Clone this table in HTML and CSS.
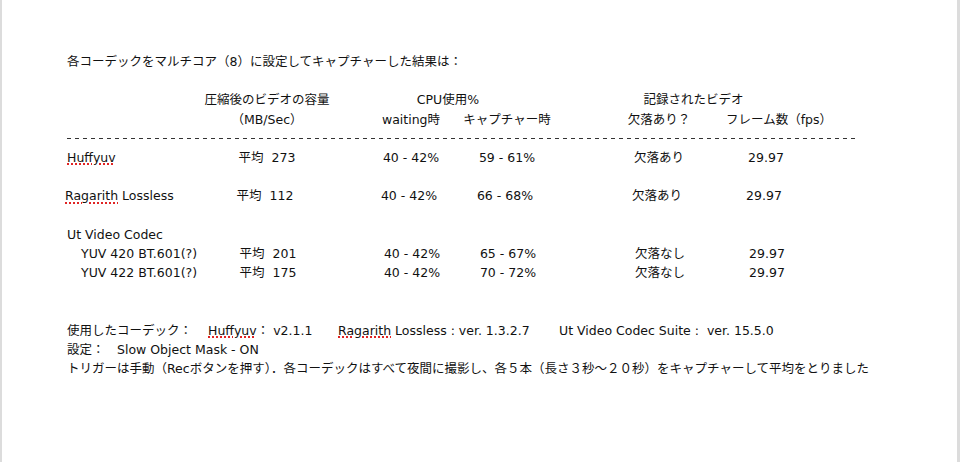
FILE: index.html
```html
<!DOCTYPE html>
<html lang="ja">
<head>
<meta charset="utf-8">
<title>コーデック比較</title>
<link rel="stylesheet" href="styles.css">
</head>
<body>
<div class="page">
  <p class="line">各コーデックをマルチコア（8）に設定してキャプチャーした結果は：</p>

  <div class="table">
    <div class="row">
      <div class="cell c2">圧縮後のビデオの容量</div>
      <div class="cell cpu">CPU使用%</div>
      <div class="cell rec">記録されたビデオ</div>
    </div>
    <div class="row">
      <div class="cell c2">（MB/Sec）</div>
      <div class="cell c3">waiting時</div>
      <div class="cell c4">キャプチャー時</div>
      <div class="cell c5">欠落あり？</div>
      <div class="cell c6 fps">フレーム数（fps）</div>
    </div>
    <div class="rule"></div>
    <div class="row">
      <div class="name"><span class="spell">Huffyuv</span></div>
      <div class="cell c2">平均&nbsp;&nbsp;273</div>
      <div class="cell c3">40 - 42%</div>
      <div class="cell c4">59 - 61%</div>
      <div class="cell c5">欠落あり</div>
      <div class="cell c6">29.97</div>
    </div>
    <div class="row spaced shift-l">
      <div class="name"><span class="spell">Ragarith</span> Lossless</div>
      <div class="cell c2">平均&nbsp;&nbsp;112</div>
      <div class="cell c3">40 - 42%</div>
      <div class="cell c4">66 - 68%</div>
      <div class="cell c5">欠落あり</div>
      <div class="cell c6">29.97</div>
    </div>
    <div class="row spaced">
      <div class="name">Ut Video Codec</div>
    </div>
    <div class="row shift-r">
      <div class="name sub">YUV 420 BT.601(?)</div>
      <div class="cell c2">平均&nbsp;&nbsp;201</div>
      <div class="cell c3">40 - 42%</div>
      <div class="cell c4">65 - 67%</div>
      <div class="cell c5">欠落なし</div>
      <div class="cell c6">29.97</div>
    </div>
    <div class="row shift-r">
      <div class="name sub">YUV 422 BT.601(?)</div>
      <div class="cell c2">平均&nbsp;&nbsp;175</div>
      <div class="cell c3">40 - 42%</div>
      <div class="cell c4">70 - 72%</div>
      <div class="cell c5">欠落なし</div>
      <div class="cell c6">29.97</div>
    </div>
  </div>

  <div class="footer">
    <div class="codecs">
      <span>使用したコーデック：</span>
      <span><span class="spell">Huffyuv</span>： v2.1.1</span>
      <span><span class="spell">Ragarith</span> Lossless : ver. 1.3.2.7</span>
      <span>Ut Video Codec Suite :&nbsp; ver. 15.5.0</span>
    </div>
    <p class="line">設定：　Slow Object Mask - ON</p>
    <p class="line">トリガーは手動（Recボタンを押す）．各コーデックはすべて夜間に撮影し、各５本（長さ３秒〜２０秒）をキャプチャーして平均をとりました</p>
  </div>
</div>
</body>
</html>
```

FILE: styles.css
```css
html, body {
  margin: 0;
  padding: 0;
  background: #fff;
}

.page {
  box-sizing: border-box;
  height: 462px;
  border-left: 2px solid #dcdcdc;
  border-right: 3px solid #dcdcdc;
  padding: 52px 0 0 65px;
  background: #fff;
  color: #111;
  font-family: "DejaVu Sans", "Noto Sans CJK JP", sans-serif;
  font-size: 12.5px;
  line-height: 19.2px;
  overflow: hidden;
}

.line {
  margin: 0;
  height: 19.2px;
  white-space: nowrap;
}

.table {
  margin-top: 19.2px;
}

.row {
  display: grid;
  grid-template-columns: 140px 120px 34px 100px 92px 56px 100px 7px 100px;
  height: 19.2px;
  white-space: nowrap;
}

.row.spaced {
  margin-top: 19.2px;
}

.row.shift-l {
  margin-left: -2px;
}

.row.shift-r {
  margin-left: 1px;
}

.name {
  grid-column: 1;
}

.name.sub {
  padding-left: 13px;
}

.cell {
  display: flex;
  justify-content: center;
  grid-row: 1;
}

.c2 { grid-column: 2; }
.c3 { grid-column: 4; }
.c4 { grid-column: 5; }
.c5 { grid-column: 7; }
.c6 { grid-column: 9; }

.cpu {
  grid-column: 4 / 6;
  padding-right: 18px;
}

.rec {
  grid-column: 7 / 10;
  padding-right: 38px;
}

.fps {
  padding-left: 26px;
}

.rule {
  width: 788px;
  height: 19.2px;
  background: repeating-linear-gradient(to right, #333 0 4px, transparent 4px 8px) left center / 788px 1px no-repeat;
}

.spell {
  text-decoration: underline dotted #e02424;
  text-decoration-thickness: 2px;
  text-underline-offset: 2px;
}

.footer {
  margin-top: 38.4px;
}

.codecs {
  display: grid;
  grid-template-columns: 141px 130px 221px auto;
  height: 19.2px;
  white-space: nowrap;
}
```
